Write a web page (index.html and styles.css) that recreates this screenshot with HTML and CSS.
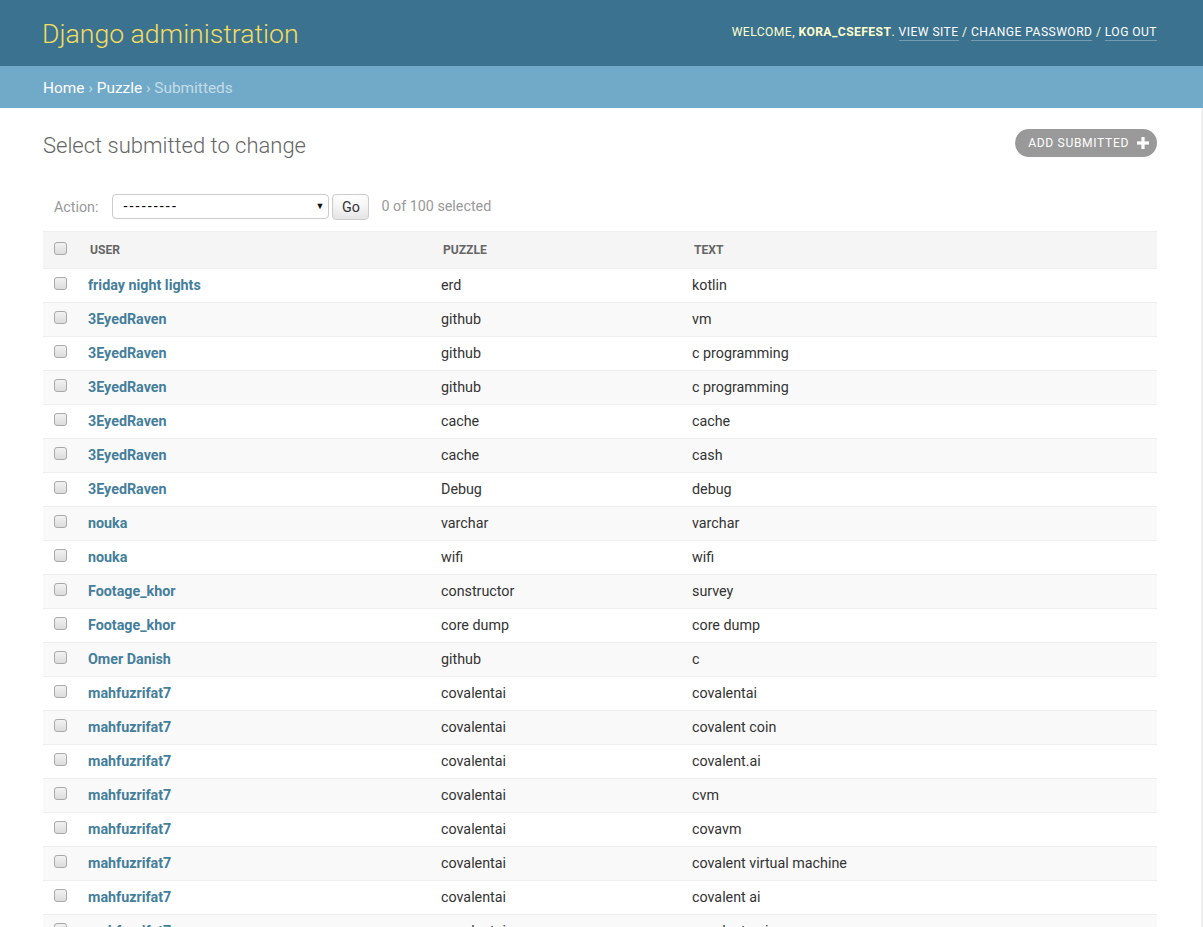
FILE: index.html
```html
<!DOCTYPE html>
<html lang="en">
<head>
<meta charset="utf-8">
<title>Select submitted to change | Django site admin</title>
<link rel="stylesheet" href="styles.css">
</head>
<body>
<div class="header">
  <div class="branding">Django administration</div>
  <div class="user-tools">
    Welcome, <strong>kora_csefest</strong>. <a href="#">View site</a> / <a href="#">Change password</a> / <a href="#">Log out</a>
  </div>
</div>
<div class="breadcrumbs">
  <a href="#">Home</a> <span class="sep">›</span> <a href="#">Puzzle</a> <span class="sep">›</span> Submitteds
</div>
<div class="content">
  <div class="title-row">
    <h1 class="page-title">Select submitted to change</h1>
    <a href="#" class="addlink">Add submitted
      <svg class="plus" width="12" height="12" viewBox="0 0 12 12"><rect x="4.4" y="0" width="3.2" height="12" fill="#fff"/><rect x="0" y="4.4" width="12" height="3.2" fill="#fff"/></svg>
    </a>
  </div>
  <div class="actions">
    <span class="action-label">Action:</span>
    <span class="select-wrap"><span class="select">---------</span><span class="arrow">▼</span></span>
    <button class="go">Go</button>
    <span class="counter">0 of 100 selected</span>
  </div>
  <table class="result-list">
    <colgroup>
      <col class="c-chk"><col class="c-user"><col class="c-puzzle"><col class="c-text">
    </colgroup>
    <thead>
      <tr>
        <th class="chk"><input type="checkbox" class="cb"></th>
        <th>User</th>
        <th>Puzzle</th>
        <th>Text</th>
      </tr>
    </thead>
    <tbody>
      <tr><td class="chk"><input type="checkbox" class="cb"></td><td><a href="#">friday night lights</a></td><td>erd</td><td>kotlin</td></tr>
      <tr><td class="chk"><input type="checkbox" class="cb"></td><td><a href="#">3EyedRaven</a></td><td>github</td><td>vm</td></tr>
      <tr><td class="chk"><input type="checkbox" class="cb"></td><td><a href="#">3EyedRaven</a></td><td>github</td><td>c programming</td></tr>
      <tr><td class="chk"><input type="checkbox" class="cb"></td><td><a href="#">3EyedRaven</a></td><td>github</td><td>c programming</td></tr>
      <tr><td class="chk"><input type="checkbox" class="cb"></td><td><a href="#">3EyedRaven</a></td><td>cache</td><td>cache</td></tr>
      <tr><td class="chk"><input type="checkbox" class="cb"></td><td><a href="#">3EyedRaven</a></td><td>cache</td><td>cash</td></tr>
      <tr><td class="chk"><input type="checkbox" class="cb"></td><td><a href="#">3EyedRaven</a></td><td>Debug</td><td>debug</td></tr>
      <tr><td class="chk"><input type="checkbox" class="cb"></td><td><a href="#">nouka</a></td><td>varchar</td><td>varchar</td></tr>
      <tr><td class="chk"><input type="checkbox" class="cb"></td><td><a href="#">nouka</a></td><td>wifi</td><td>wifi</td></tr>
      <tr><td class="chk"><input type="checkbox" class="cb"></td><td><a href="#">Footage_khor</a></td><td>constructor</td><td>survey</td></tr>
      <tr><td class="chk"><input type="checkbox" class="cb"></td><td><a href="#">Footage_khor</a></td><td>core dump</td><td>core dump</td></tr>
      <tr><td class="chk"><input type="checkbox" class="cb"></td><td><a href="#">Omer Danish</a></td><td>github</td><td>c</td></tr>
      <tr><td class="chk"><input type="checkbox" class="cb"></td><td><a href="#">mahfuzrifat7</a></td><td>covalentai</td><td>covalentai</td></tr>
      <tr><td class="chk"><input type="checkbox" class="cb"></td><td><a href="#">mahfuzrifat7</a></td><td>covalentai</td><td>covalent coin</td></tr>
      <tr><td class="chk"><input type="checkbox" class="cb"></td><td><a href="#">mahfuzrifat7</a></td><td>covalentai</td><td>covalent.ai</td></tr>
      <tr><td class="chk"><input type="checkbox" class="cb"></td><td><a href="#">mahfuzrifat7</a></td><td>covalentai</td><td>cvm</td></tr>
      <tr><td class="chk"><input type="checkbox" class="cb"></td><td><a href="#">mahfuzrifat7</a></td><td>covalentai</td><td>covavm</td></tr>
      <tr><td class="chk"><input type="checkbox" class="cb"></td><td><a href="#">mahfuzrifat7</a></td><td>covalentai</td><td>covalent virtual machine</td></tr>
      <tr><td class="chk"><input type="checkbox" class="cb"></td><td><a href="#">mahfuzrifat7</a></td><td>covalentai</td><td>covalent ai</td></tr>
      <tr><td class="chk"><input type="checkbox" class="cb"></td><td><a href="#">mahfuzrifat7</a></td><td>covalentai</td><td>covalent coin</td></tr>
    </tbody>
  </table>
</div>
</body>
</html>
```

FILE: styles.css
```css
html {
  overflow: hidden;
}
body {
  margin: 0;
  font-family: Roboto, "Liberation Sans", sans-serif;
  font-size: 14px;
  color: #333;
  background: #fff;
}
a {
  text-decoration: none;
}

/* Header */
.header {
  height: 66px;
  padding: 0 46px 0 43px;
  background: #3b7290;
  display: flex;
  align-items: center;
  justify-content: space-between;
}
.branding {
  font-size: 26.6px;
  font-weight: 300;
  color: #f5dd5d;
  margin-left: -1px;
}
.user-tools {
  font-size: 12.1px;
  letter-spacing: 0.45px;
  text-transform: uppercase;
  color: #ffc;
  font-weight: 400;
  margin-top: -2px;
}
.user-tools strong {
  font-weight: 700;
}
.user-tools a {
  color: #fff;
  border-bottom: 1px solid rgba(255, 255, 255, 0.3);
  padding-bottom: 1px;
}

/* Breadcrumbs */
.breadcrumbs {
  height: 42px;
  line-height: 45px;
  overflow: hidden;
  padding: 0 43px;
  background: #71aac9;
  color: #c4dce8;
  font-size: 15.4px;
}
.breadcrumbs a {
  color: #fff;
}
.breadcrumbs .sep {
  color: #c4dce8;
}

/* Content */
.content {
  padding: 21px 44px 0 43px;
  border-right: 2px solid #efefef;
}
.title-row {
  display: flex;
  justify-content: space-between;
  align-items: flex-end;
  height: 28px;
}
.page-title {
  margin: 0 0 -2px;
  font-size: 22px;
  line-height: 26px;
  font-weight: 300;
  color: #666;
}
.addlink {
  position: relative;
  display: block;
  height: 28px;
  line-height: 28px;
  padding: 0 28px 0 13px;
  border-radius: 14px;
  background: #999;
  color: #fff;
  font-size: 12.1px;
  letter-spacing: 0.65px;
  text-transform: uppercase;
}
.addlink .plus {
  position: absolute;
  right: 8px;
  top: 8px;
}

/* Actions */
.actions {
  margin-top: 27px;
  padding: 10px 11px 10px;
  height: 27px;
  display: flex;
  align-items: flex-start;
  color: #999;
  font-size: 14.3px;
}
.action-label {
  line-height: 26px;
  margin-right: 14px;
}
.select-wrap {
  position: relative;
  box-sizing: border-box;
  width: 217px;
  height: 25px;
  border: 1px solid #ccc;
  border-radius: 4px;
  background: #fff;
  color: #000;
}
.select {
  display: block;
  padding-left: 10px;
  line-height: 23px;
  font-size: 14.3px;
  letter-spacing: 2.1px;
}
.arrow {
  position: absolute;
  right: 4px;
  top: 6px;
  font-size: 9px;
  line-height: 10px;
  color: #111;
}
.go {
  box-sizing: border-box;
  height: 26px;
  width: 37px;
  margin: 0 0 0 3px;
  padding: 0;
  font-family: Roboto, "Liberation Sans", sans-serif;
  font-size: 14.3px;
  color: #333;
  border: 1px solid #ccc;
  border-radius: 4px;
  background: #fff;
  box-shadow: 0 -15px 20px -10px rgba(0, 0, 0, 0.15) inset;
}
.counter {
  margin-left: 12px;
  line-height: 24px;
  font-size: 14.3px;
  color: #999;
}

/* Table */
.result-list {
  width: 100%;
  table-layout: fixed;
  border-collapse: collapse;
}
.c-chk { width: 37px; }
.c-user { width: 353px; }
.c-puzzle { width: 251px; }
.result-list th,
.result-list td {
  text-align: left;
  vertical-align: top;
  padding: 0;
}
.result-list thead th {
  height: 37px;
  box-sizing: border-box;
  padding: 0 10px;
  background: #f5f5f5;
  border-top: 1px solid #eee;
  border-bottom: 1px solid #eee;
  color: #666;
  font-size: 12.1px;
  font-weight: 700;
  text-transform: uppercase;
  vertical-align: middle;
}
.result-list thead th.chk {
  padding: 10px 0 0 11px;
  vertical-align: top;
}
.result-list tbody td {
  padding: 8px;
  line-height: 17px;
  font-size: 14.3px;
  border-bottom: 1px solid #eee;
  color: #333;
}
.result-list tbody td.chk {
  padding: 8px 0 8px 11px;
}
.result-list tbody td a {
  color: #447e9b;
  font-weight: 700;
}
.result-list tbody tr:nth-child(even) {
  background: #f9f9f9;
}
.cb {
  appearance: none;
  -webkit-appearance: none;
  display: block;
  box-sizing: border-box;
  width: 13px;
  height: 13px;
  margin: 0;
  border: 1px solid #a9a9a9;
  border-radius: 3px;
  background: linear-gradient(#f2f2f2, #dcdcdc);
}
```
